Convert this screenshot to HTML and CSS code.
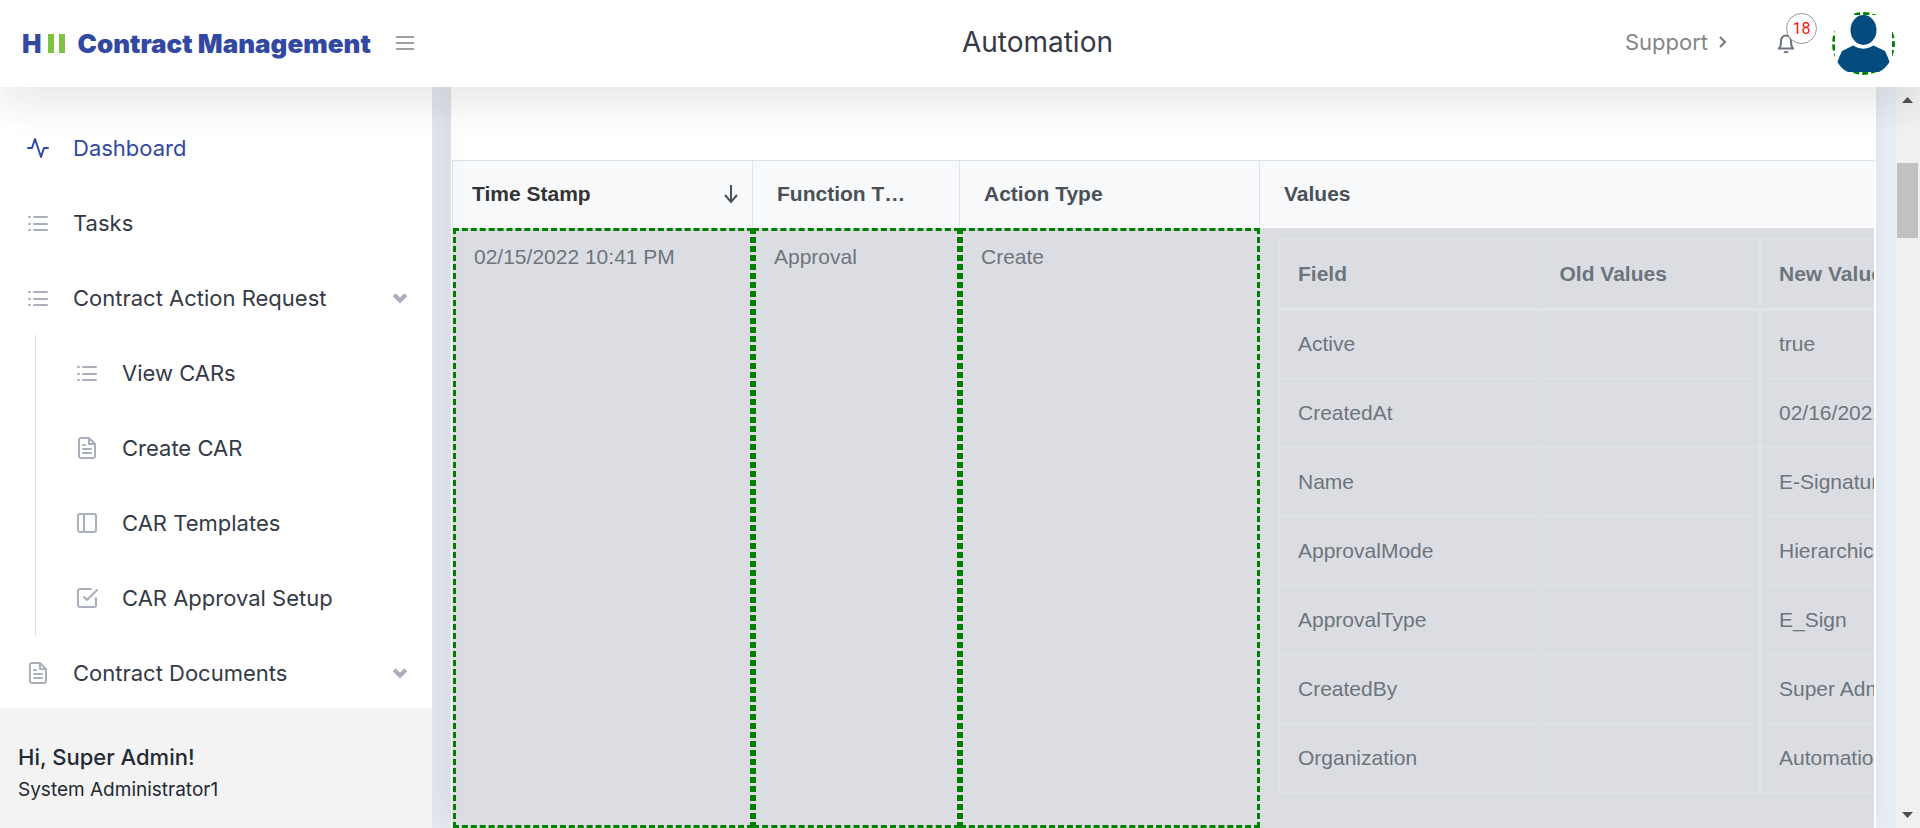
FILE: index.html
```html
<!DOCTYPE html>
<html lang="en">
<head>
<meta charset="utf-8">
<title>Contract Management</title>
<link rel="stylesheet" href="styles.css">
</head>
<body>
<svg class="sprite" aria-hidden="true">
  <symbol id="i-list" viewBox="0 0 24 24"><path d="M8 6h13M8 13h13M8 19h13M3 6h1M3 13h1M3 19h1"/></symbol>
  <symbol id="i-activity" viewBox="0 0 24 24"><path d="M22 12h-4l-3 9L9 3l-3 9H2"/></symbol>
  <symbol id="i-file" viewBox="0 0 24 24"><path d="M14 2H6a2 2 0 0 0-2 2v16a2 2 0 0 0 2 2h12a2 2 0 0 0 2-2V8zM14 2v6h6M16 13H8M16 17H8M10 9H8"/></symbol>
  <symbol id="i-panel" viewBox="0 0 24 24"><rect x="3" y="3" width="18" height="18" rx="2"/><path d="M9 3v18"/></symbol>
  <symbol id="i-check" viewBox="0 0 24 24"><path d="M9 11l3 3L22 4M21 12v7a2 2 0 0 1-2 2H5a2 2 0 0 1-2-2V5a2 2 0 0 1 2-2h11"/></symbol>
  <symbol id="i-down" viewBox="0 0 24 24"><path d="M5 8l7 7 7-7"/></symbol>
</svg>

<header class="topbar">
  <div class="brand">
    <a class="logo" href="#"><span class="logo-h">H</span><span class="logo-bars"><i></i><i></i></span><span class="logo-name">Contract Management</span></a>
    <button class="burger" type="button" aria-label="Toggle menu"><span></span><span></span><span></span></button>
  </div>
  <h1 class="title">Automation</h1>
  <div class="tools">
    <a class="support" href="#">Support
      <svg class="support-arrow" viewBox="0 0 8 12"><path d="M1 1l5 5-5 5"/></svg>
    </a>
    <button class="bell" type="button" aria-label="Notifications">
      <svg class="bell-icon" viewBox="0 0 18 20"><path d="M1 14.500h16M2.500 14c1.500-2 1.500-3 1.500-7a5 5.500 0 0 1 10 0c0 4 0 5 1.500 7M7 17.500q2 1.500 4 0"/></svg>
      <span class="badge">18</span>
    </button>
    <button class="avatar" type="button" aria-label="Profile">
      <svg class="avatar-icon" viewBox="0 0 57 57"><ellipse cx="28.500" cy="15" rx="13" ry="15"/><path d="M18 30.500Q28.500 37 38.500 30.500L50 36Q53 42 54.500 47Q50 54 44 57H13Q6 54 2.500 47Q4 42 7 36Z"/></svg>
    </button>
  </div>
</header>

<div class="body">
  <aside class="sidebar">
    <nav class="nav">
      <a class="item active" href="#"><svg class="icon"><use href="#i-activity"/></svg><span>Dashboard</span></a>
      <a class="item" href="#"><svg class="icon"><use href="#i-list"/></svg><span>Tasks</span></a>
      <a class="item" href="#"><svg class="icon"><use href="#i-list"/></svg><span>Contract Action Request</span><svg class="caret"><use href="#i-down"/></svg></a>
      <div class="sub">
        <a class="item" href="#"><svg class="icon"><use href="#i-list"/></svg><span>View CARs</span></a>
        <a class="item" href="#"><svg class="icon"><use href="#i-file"/></svg><span>Create CAR</span></a>
        <a class="item" href="#"><svg class="icon"><use href="#i-panel"/></svg><span>CAR Templates</span></a>
        <a class="item" href="#"><svg class="icon"><use href="#i-check"/></svg><span>CAR Approval Setup</span></a>
      </div>
      <a class="item" href="#"><svg class="icon"><use href="#i-file"/></svg><span>Contract Documents</span><svg class="caret"><use href="#i-down"/></svg></a>
    </nav>
    <div class="user">
      <div class="user-name">Hi, Super Admin!</div>
      <div class="user-role">System Administrator1</div>
    </div>
  </aside>

  <main class="main">
    <section class="card">
      <div class="grid">
        <table class="log">
          <colgroup><col class="c-time"><col class="c-func"><col class="c-action"><col></colgroup>
          <thead>
            <tr>
              <th class="sorted"><div class="sort">Time Stamp<svg class="sort-icon" viewBox="0 0 16 20"><path d="M8 1v17M2 11l6 7 6-7"/></svg></div></th>
              <th>Function T…</th>
              <th>Action Type</th>
              <th>Values</th>
            </tr>
          </thead>
          <tbody>
            <tr>
              <td class="marked">02/15/2022 10:41 PM</td>
              <td class="marked">Approval</td>
              <td class="marked">Create</td>
              <td class="values">
                <table class="changes">
                  <colgroup><col class="c-field"><col class="c-old"><col></colgroup>
                  <thead><tr><th>Field</th><th>Old Values</th><th>New Values</th></tr></thead>
                  <tbody>
                    <tr><td>Active</td><td></td><td>true</td></tr>
                    <tr><td>CreatedAt</td><td></td><td>02/16/2022</td></tr>
                    <tr><td>Name</td><td></td><td>E-Signature</td></tr>
                    <tr><td>ApprovalMode</td><td></td><td>Hierarchical</td></tr>
                    <tr><td>ApprovalType</td><td></td><td>E_Sign</td></tr>
                    <tr><td>CreatedBy</td><td></td><td>Super Admin</td></tr>
                    <tr><td>Organization</td><td></td><td>Automation</td></tr>
                  </tbody>
                </table>
              </td>
            </tr>
          </tbody>
        </table>
      </div>
    </section>
  </main>

  <div class="scrollbar" aria-hidden="true">
    <svg class="arrow" viewBox="0 0 11 6"><path d="M0 6L5.500 0 11 6z"/></svg>
    <div class="track"><div class="thumb"></div></div>
    <svg class="arrow" viewBox="0 0 11 6"><path d="M0 0L5.500 6 11 0z"/></svg>
  </div>
</div>
</body>
</html>
```

FILE: styles.css
```css
* { box-sizing: border-box; }

body {
  margin: 0;
  height: 100vh;
  display: flex;
  flex-direction: column;
  overflow: hidden;
  background: #e9edf5;
  color: #343a46;
  font-family: Inter, "Open Sans", sans-serif;
  font-size: 22px;
}

a { color: inherit; text-decoration: none; }
button { padding: 0; border: 0; background: none; }
.sprite { display: none; }

/* Top bar */
.topbar {
  position: relative;
  z-index: 3;
  flex: none;
  height: 87px;
  display: grid;
  grid-template-columns: 450px 1fr auto;
  align-items: center;
  background: #fff;
  box-shadow: 0 12px 52px rgba(4, 9, 20, .03), 0 22px 34px rgba(4, 9, 20, .06);
}
.brand { display: flex; align-items: center; padding-left: 22px; }
.logo { display: flex; align-items: center; color: #3349a1; font: 900 26px/32px Inter, sans-serif; }
.logo-bars { display: flex; gap: 5px; margin: 0 13px 0 6px; }
.logo-bars i { width: 6px; height: 19px; background: #7dc243; }
.burger { display: flex; flex-direction: column; gap: 4px; width: 18px; margin-left: 25px; padding-bottom: 2px; }
.burger span { height: 2px; background: #a0a0a4; }
.title { margin: 0; padding-bottom: 4px; font-size: 28px; font-weight: 400; line-height: 36px; text-align: center; }
.tools { display: flex; align-items: center; padding-right: 25px; }
.support { display: flex; align-items: center; gap: 11px; padding-bottom: 4px; color: #868686; line-height: 30px; }
.support-arrow { width: 8px; height: 12px; fill: none; stroke: #777; stroke-width: 2; }
.bell { position: relative; width: 18px; height: 20px; margin: 0 37px 0 50px; }
.bell-icon { display: block; width: 18px; height: 20px; fill: none; stroke: #6c757d; stroke-width: 2; }
.badge {
  position: absolute;
  left: 9px;
  top: -21px;
  width: 31px;
  height: 31px;
  border: 1px solid #999;
  border-radius: 50%;
  background: #fff;
  color: #f11;
  font: 16px/30px Roboto, sans-serif;
}
.avatar { width: 63px; height: 63px; border: 3px dashed green; border-radius: 50%; }
.avatar-icon { display: block; width: 57px; height: 57px; background: #fff; fill: #044b7f; }

/* Sidebar */
.body { flex: 1; min-height: 0; display: flex; }
.sidebar {
  position: relative;
  z-index: 2;
  flex: none;
  width: 432px;
  display: flex;
  flex-direction: column;
  background: #fff;
  box-shadow: 8px 0 36px rgba(4, 9, 20, .04);
}
.nav { flex: 1; min-height: 0; overflow: hidden; padding: 23px 22px 0 26px; }
.item { display: flex; align-items: center; height: 75px; line-height: 30px; }
.item span { flex: 1; margin-left: 23px; }
.active { color: #3349a1; }
.icon { width: 24px; height: 24px; fill: none; stroke: #a9afbb; stroke-width: 2; stroke-linecap: round; stroke-linejoin: round; }
.active .icon { stroke: #3349a1; }
.caret { width: 20px; height: 20px; fill: none; stroke: #a9afbb; stroke-width: 5; }
.sub { margin-left: 9px; padding-left: 39px; border-left: 1px solid #d8dae0; }
.user { flex: none; height: 120px; padding: 33px 18px; background: #f3f3f3; color: #232a35; }
.user-name { font-weight: 500; line-height: 32px; }
.user-role { font-size: 19px; line-height: 34px; }

/* Content */
.main { flex: 1; min-width: 0; padding: 0 20px 0 19px; overflow: hidden; }
.card { height: 100%; padding: 73px 1px 0; background: #fff; box-shadow: -6px 0 28px rgba(4, 9, 20, .08); }
.grid { height: 100%; overflow: hidden; border: 1px solid #dee2e6; border-right-color: #fff; border-bottom: 0; font-family: "Liberation Sans", Arial, sans-serif; font-size: 21px; }
.log { width: 100%; table-layout: fixed; border-spacing: 0; font-size: 21px; line-height: 32px; }
.c-time, .c-action { width: 300px; }
.c-func { width: 207px; }
.log > thead th {
  height: 67px;
  padding: 0 24px;
  border-right: 1px solid #dee2e6;
  border-bottom: 1px solid #fff;
  background: #f8f9fb;
  color: #495057;
  text-align: left;
}
.log > thead th:last-child { border-right: 0; }
.log > thead .sorted { padding: 0 13px 0 19px; color: #333; }
.sort { display: flex; align-items: center; justify-content: space-between; }
.sort-icon { width: 16px; height: 20px; fill: none; stroke: #495057; stroke-width: 2; }
.log td { color: #6c757d; vertical-align: top; }
.log > tbody > tr > td { background: #dcdde2; }
.log .marked { padding: 10px 18px; border: 3px dashed green; }
.log .values { padding: 10px 0 35px 18px; overflow: hidden; }

.changes { width: 680px; table-layout: fixed; border-collapse: collapse; line-height: 32px; }
.c-field { width: 262px; }
.c-old { width: 219px; }
.changes th, .changes td { height: 69px; padding: 0 18px; border: 1px solid #dee4e8; vertical-align: middle; }
.changes th { height: 70px; border-top-width: 2px; border-bottom-width: 3px; color: #6c757d; text-align: left; }
.changes th:first-child, .changes td:first-child { border-left-width: 2px; }
.changes th:last-child, .changes td:last-child { border-left-width: 2px; }

/* Scroll bar */
.scrollbar { flex: none; width: 24px; display: flex; flex-direction: column; align-items: center; padding: 10px 1px 10px 0; background: #f0f0f0; }
.arrow { width: 11px; height: 6px; fill: #505050; }
.track { flex: 1; padding-top: 60px; }
.thumb { width: 21px; height: 75px; background: #c1c1c1; }
```
